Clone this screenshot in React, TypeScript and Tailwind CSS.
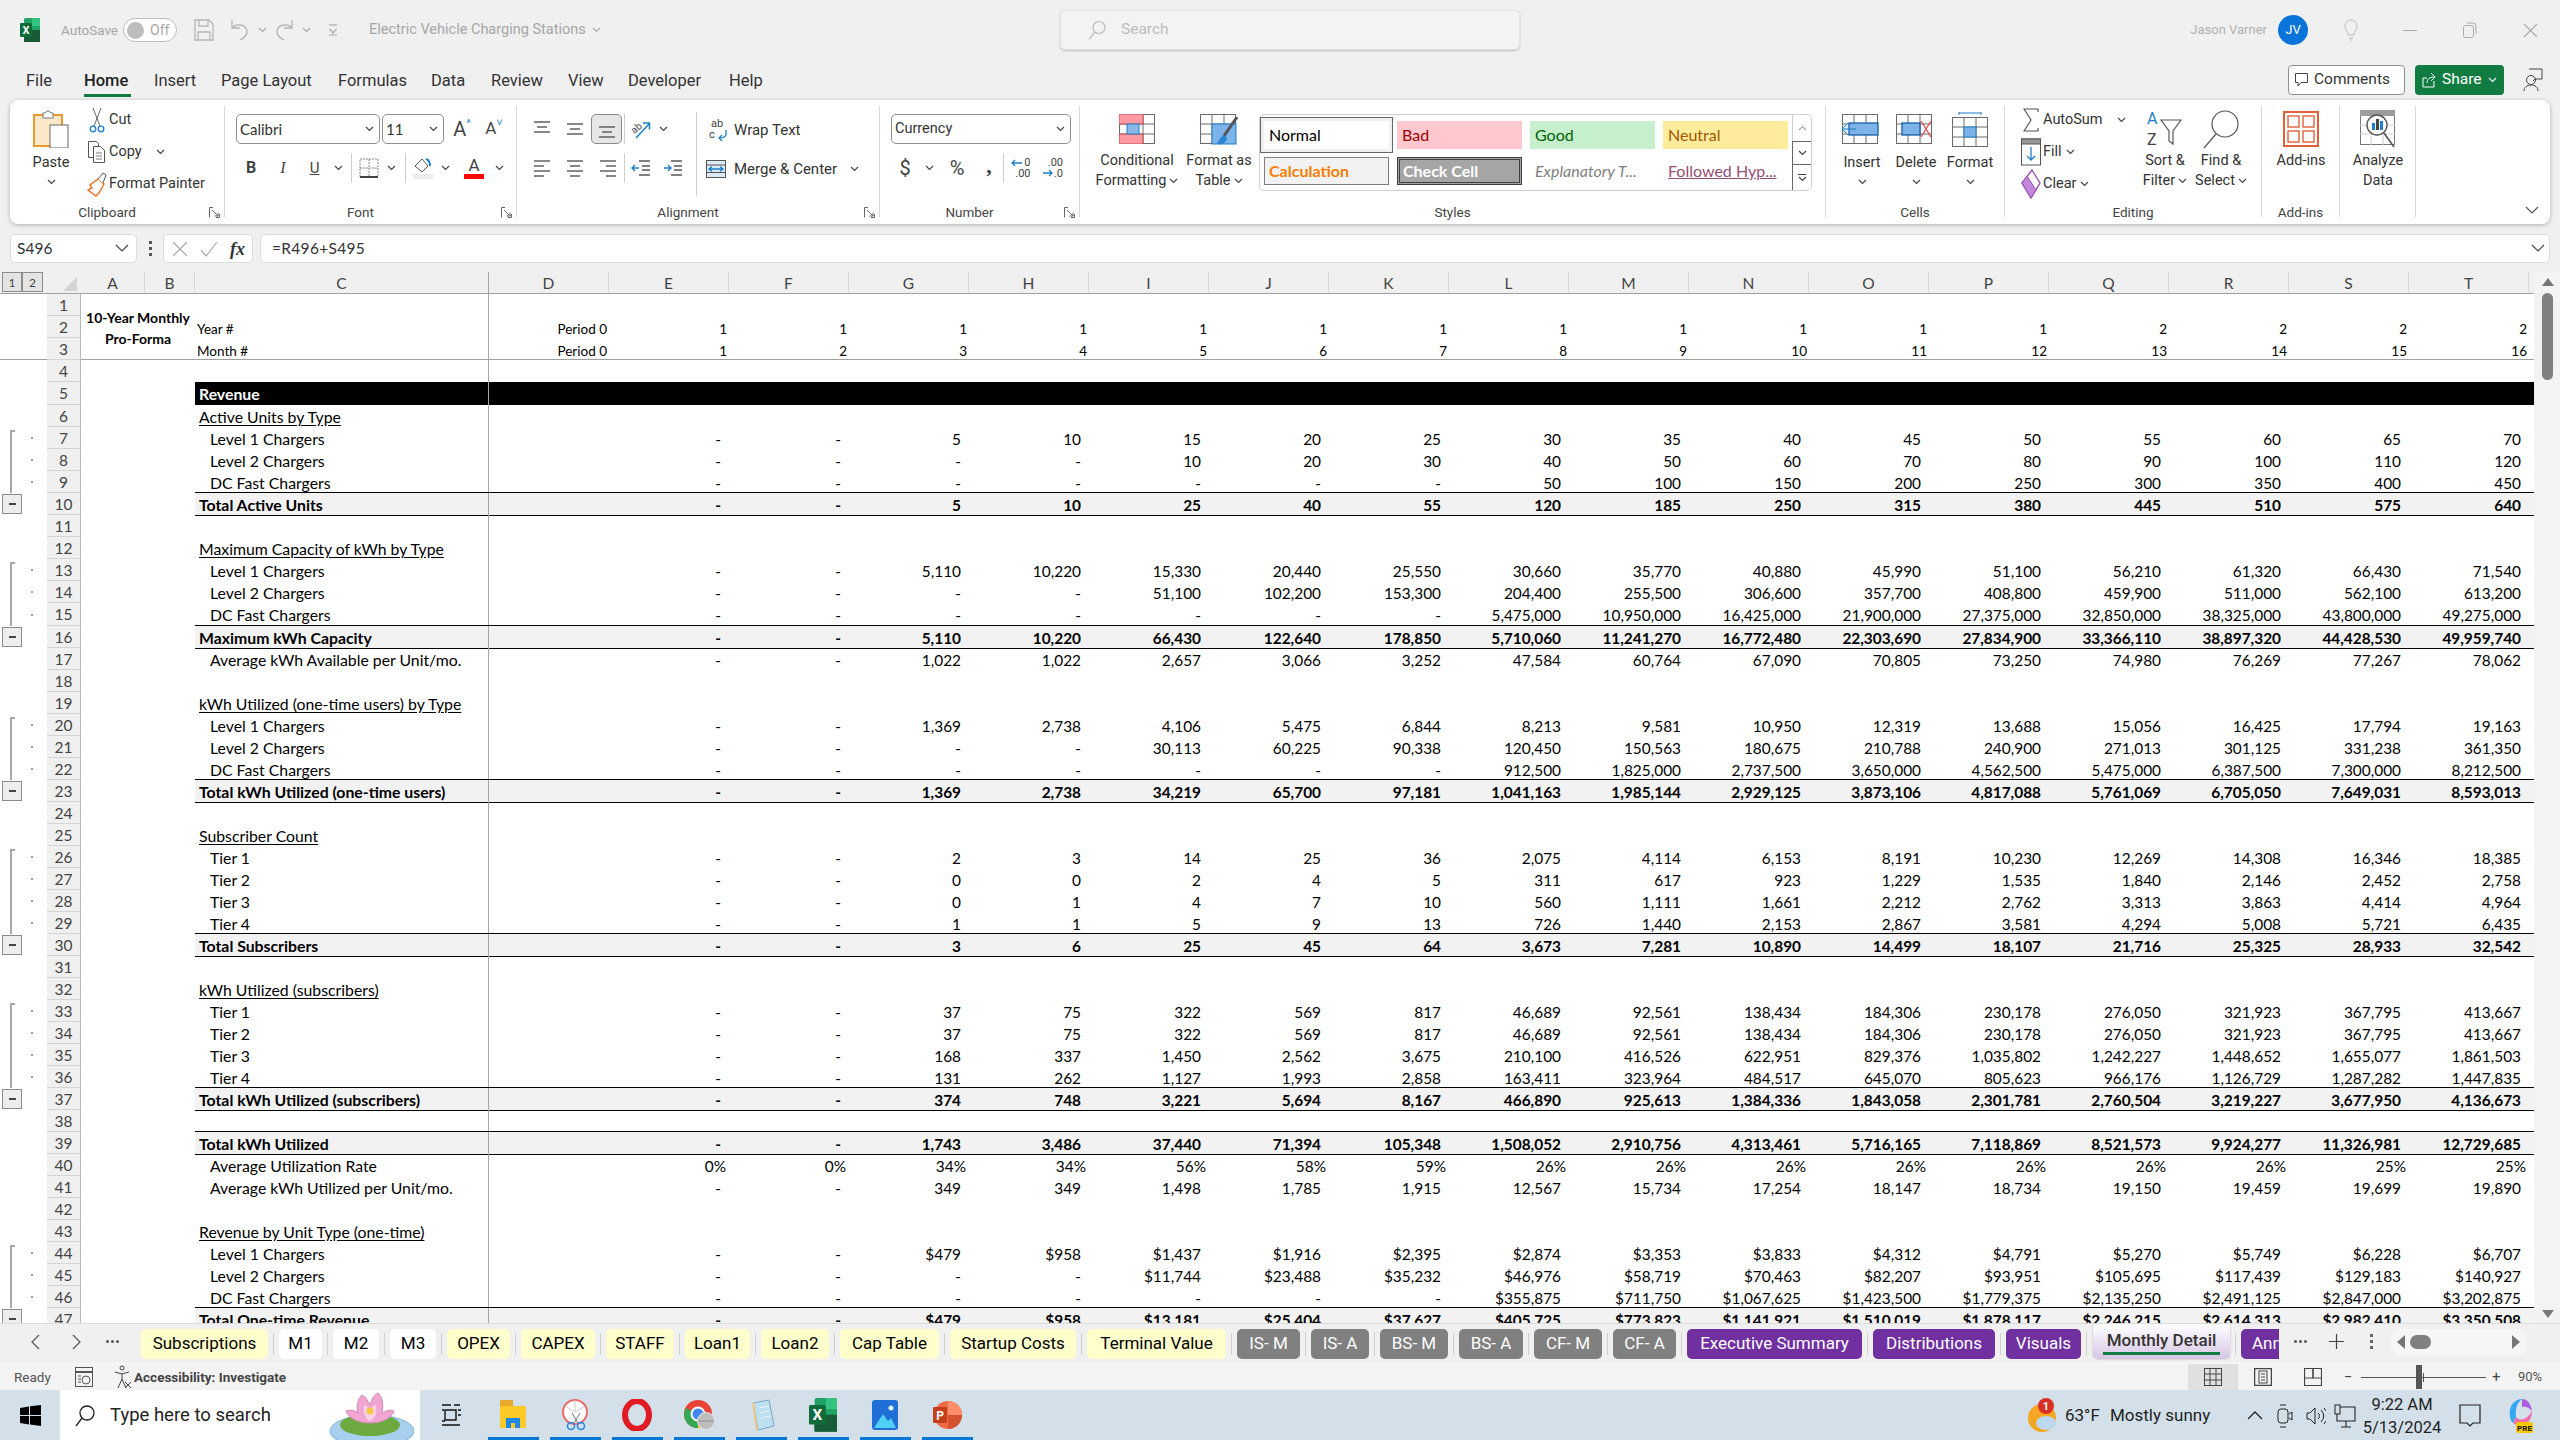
import React from 'react';

type N = React.ReactNode;
const Svg = ({ w, h, children, className }: { w: number; h: number; children: N; className?: string }) => (
  <svg width={w} height={h} viewBox={`0 0 ${w} ${h}`} fill="none" className={`flex-none ${className || ''}`}>{children}</svg>
);
const Chev = ({ c = '#444' }: { c?: string }) => (
  <Svg w={9} h={6}><path d="M1 1l3.5 3.5L8 1" stroke={c} strokeWidth="1.2" /></Svg>
);
const BigChev = ({ c = '#555' }: { c?: string }) => (
  <Svg w={14} h={9}><path d="M1 1l6 6 6-6" stroke={c} strokeWidth="1.2" /></Svg>
);

const ExcelLogo = ({ s = 20 }: { s?: number }) => (
  <svg width={s} height={s * 1.2} viewBox="0 0 20 24" className="flex-none">
    <rect x="4" y="0" width="16" height="24" rx="1.5" fill="#21a366" />
    <rect x="12" y="0" width="8" height="8" fill="#33c481" />
    <rect x="4" y="12" width="16" height="12" fill="#107c41" />
    <rect x="12" y="12" width="8" height="6" fill="#185c37" />
    <rect x="4" y="18" width="16" height="6" fill="#185c37" />
    <rect x="0" y="5" width="12" height="14" rx="1" fill="#0f6b3a" />
    <text x="6" y="16" fontSize="11" fontWeight="700" fill="#fff" textAnchor="middle" fontFamily="Roboto, sans-serif">X</text>
  </svg>
);

const Lines = ({ ys, xs }: { ys: number[]; xs: [number, number][] }) => (
  <Svg w={20} h={20}>
    {ys.map((y, i) => <path key={i} d={`M${xs[i][0]} ${y}H${xs[i][1]}`} stroke="#555" strokeWidth="1.4" />)}
  </Svg>
);

const Grid = ({ w = 36, h = 30, c = '#6b6b6b' }: { w?: number; h?: number; c?: string }) => (
  <>
    <rect x=".5" y=".5" width={w - 1} height={h - 1} fill="#fff" stroke={c} />
    {[1, 2].map(i => <path key={i} d={`M${(w * i) / 3} 0V${h}`} stroke={c} />)}
    {[1, 2].map(i => <path key={i} d={`M0 ${(h * i) / 3}H${w}`} stroke={c} />)}
  </>
);

const Group = ({ className, label, launcher, children }: { className: string; label?: string; launcher?: boolean; children: N }) => (
  <div className={`flex-none flex flex-col h-[111px] my-[6px] border-r border-[#d9d9d9] ${className}`}>
    <div className="flex-1 flex min-h-0">{children}</div>
    <div className="h-[20px] -mb-[5px] flex items-center">
      <div className="flex-1 text-center text-[13.5px] leading-[20px] text-[#444]">{label}</div>
      {launcher && (
        <div className="w-[20px] flex justify-center">
          <Svg w={11} h={11}><path d="M.5 10.5V.5H4M10.5 7v3.5H7M3 3l6 6M9 5.5V9H5.5" stroke="#666" /></Svg>
        </div>
      )}
    </div>
  </div>
);

const Box = ({ className, children }: { className: string; children: N }) => (
  <div className={`flex-none flex items-center justify-center ${className}`}>{children}</div>
);
const VSep = ({ className }: { className: string }) => <div className={`flex-none bg-[#cfcfcf] w-[1px] ${className}`} />;

const IconRow = ({ icon, label, chev, className }: { icon: N; label: string; chev?: N; className?: string }) => (
  <div className={`h-7 flex items-center text-[14.5px] text-[#333] whitespace-nowrap ${className || ''}`}>
    <div className="w-[24px] flex-none flex justify-center">{icon}</div>
    <span>{label}</span>
    {chev}
  </div>
);

const BigBtn = ({ icon, lines, className, chevLine, top }: { icon: N; lines: string[]; className: string; chevLine?: boolean; top?: string }) => (
  <div className={`flex-none flex flex-col items-center ${className}`}>
    <div className={`flex items-center justify-center ${top || 'h-[45px]'}`}>{icon}</div>
    {lines.map((l, i) => (
      <div key={i} className="leading-[20px] text-[14.5px] text-[#333] whitespace-nowrap flex items-center gap-[3px]">
        {l}{chevLine && i === lines.length - 1 && <Chev />}
      </div>
    ))}
  </div>
);

function Ribbon() {
  return (
    <div className="mx-[10px] h-[124px] bg-white rounded-[8px] shadow-[0_1px_4px_rgba(0,0,0,0.28)] flex flex-none">
      {/* Clipboard */}
      <Group className="w-[215px]" label="Clipboard" launcher>
        <div className="w-[50px] ml-[16px] flex-none flex flex-col items-center pt-[4px]">
          <Svg w={36} h={38}>
            <rect x="1" y="5" width="28" height="31" fill="#fbe8c9" stroke="#e89a2e" strokeWidth="2" />
            <path d="M10 5V3h2l2-2h2l2 2h2v5H10z" fill="#fff" stroke="#777" />
            <rect x="17" y="15" width="18" height="23" fill="#fff" stroke="#666" />
          </Svg>
          <div className="text-[14.5px] text-[#333] leading-[20px] mt-[5px]">Paste</div>
          <div className="mt-[6px]"><Chev /></div>
        </div>
        <div className="ml-[9px] flex flex-col gap-1">
          <IconRow label="Cut" icon={
            <Svg w={16} h={26}>
              <path d="M5 19L12 1M11 19L4 1" stroke="#666" />
              <circle cx="4" cy="22" r="2.8" stroke="#1e7fc9" strokeWidth="1.3" />
              <circle cx="12" cy="22" r="2.8" stroke="#1e7fc9" strokeWidth="1.3" />
            </Svg>} />
          <IconRow label="Copy" chev={<div className="ml-[14px]"><Chev /></div>} icon={
            <Svg w={20} h={24}>
              <path d="M1.5 1.5h8l2 2v14h-10z" fill="#fff" stroke="#555" />
              <path d="M6.5 6.5h7l4 4v12h-11z" fill="#fff" stroke="#555" />
              <path d="M9 13h6M9 16h6M9 19h6" stroke="#777" />
            </Svg>} />
          <IconRow label="Format Painter" icon={
            <Svg w={20} h={26}>
              <path d="M11 8l6 5-5 9-3 3-8-6 4-2-2-3z" fill="#fff" stroke="#e8792a" strokeWidth="1.5" />
              <path d="M11 8l5-6 3 2-3 8" fill="#fff" stroke="#555" />
            </Svg>} />
        </div>
      </Group>

      {/* Font */}
      <Group className="w-[292px]" label="Font" launcher>
        <div className="pl-[11px] pt-[8px] flex flex-col gap-[10px]">
          <div className="flex items-center h-[30px]">
            <div className="w-[144px] h-[30px] rounded-[5px] border border-[#8f8f8f] flex items-center justify-between px-[3px] pr-[5px] text-[15px] font-['Lato',sans-serif] text-[#333]">Calibri<Chev /></div>
            <div className="ml-[2px] w-[62px] h-[30px] rounded-[5px] border border-[#8f8f8f] flex items-center justify-between px-[3px] pr-[5px] text-[15px] font-['Lato',sans-serif] text-[#333]">11<Chev /></div>
            <Box className="w-[32px] ml-[2px] text-[20px] text-[#444]">A<span className="text-[11px] text-[#1e7fc9] -mt-[10px]">^</span></Box>
            <Box className="w-[32px] text-[17px] text-[#444]">A<span className="text-[11px] text-[#1e7fc9] -mt-[12px]">˅</span></Box>
          </div>
          <div className="flex items-center h-[28px] -ml-[1px] text-[#444]">
            <Box className="w-[32px] font-bold text-[16px]">B</Box>
            <Box className="w-[32px] italic text-[16px] font-['Liberation_Serif',serif]">I</Box>
            <Box className="w-[31px] underline text-[15px]">U</Box>
            <Box className="w-[16px]"><Chev /></Box>
            <Box className="w-[10px]"><VSep className="h-[30px]" /></Box>
            <Box className="w-[26px]">
              <Svg w={20} h={20}>
                <path d="M1 1h18v18H1zM10 1v18M1 10h18" stroke="#888" strokeDasharray="2 1" />
                <path d="M1 19h18" stroke="#444" strokeWidth="2" />
              </Svg>
            </Box>
            <Box className="w-[18px]"><Chev /></Box>
            <Box className="w-[10px]"><VSep className="h-[30px]" /></Box>
            <Box className="w-[26px]">
              <Svg w={22} h={24}>
                <path d="M3 10l7-7 6 7-6 6z" fill="#fff" stroke="#555" />
                <path d="M14 3c3 1 4 4 4 7" stroke="#1e7fc9" strokeWidth="2" />
                <rect x="1" y="18" width="20" height="5" fill="#ececec" />
              </Svg>
            </Box>
            <Box className="w-[18px]"><Chev /></Box>
            <Box className="w-[40px]">
              <div className="flex flex-col items-center leading-[16px] text-[17px]">A<div className="w-[20px] h-[5px] bg-[#ff0000] mt-[1px]" /></div>
            </Box>
            <Box className="w-[10px]"><Chev /></Box>
          </div>
        </div>
      </Group>

      {/* Alignment */}
      <Group className="w-[363px]" label="Alignment" launcher>
        <div className="ml-[8px] w-[171px] flex-none pt-[8px] flex flex-col gap-[10px]">
          <div className="flex items-center h-[30px]">
            <Box className="w-[33px]"><Lines ys={[3, 8, 13]} xs={[[2, 18], [5, 15], [2, 18]]} /></Box>
            <Box className="w-[33px]"><Lines ys={[5, 10, 15]} xs={[[2, 18], [5, 15], [2, 18]]} /></Box>
            <Box className="w-[31px] h-[30px] bg-[#e6e6e6] border border-[#8a8a8a] rounded-[5px]"><Lines ys={[8, 13, 18]} xs={[[2, 18], [5, 15], [2, 18]]} /></Box>
            <VSep className="h-[30px] ml-[2px]" />
            <Box className="w-[30px]">
              <Svg w={22} h={22}>
                <text x="2" y="13" fontSize="10" fill="#444" transform="rotate(-40 8 10)" fontFamily="Roboto, sans-serif">ab</text>
                <path d="M7 20L20 6M14 5h6.500v6.500" stroke="#1e7fc9" strokeWidth="1.5" />
              </Svg>
            </Box>
            <Box className="w-[16px]"><Chev /></Box>
          </div>
          <div className="flex items-center h-[28px]">
            <Box className="w-[33px]"><Lines ys={[3, 8, 13, 18]} xs={[[2, 18], [2, 12], [2, 18], [2, 12]]} /></Box>
            <Box className="w-[33px]"><Lines ys={[3, 8, 13, 18]} xs={[[2, 18], [5, 15], [2, 18], [5, 15]]} /></Box>
            <Box className="w-[33px]"><Lines ys={[3, 8, 13, 18]} xs={[[2, 18], [8, 18], [2, 18], [8, 18]]} /></Box>
            <VSep className="h-[30px]" />
            <Box className="w-[32px]">
              <Svg w={20} h={20}>
                <path d="M8 3h11M11 8h8M11 12h8M8 17h11" stroke="#555" strokeWidth="1.4" />
                <path d="M8 10H1M4 7l-3 3 3 3" stroke="#1e7fc9" strokeWidth="1.4" />
              </Svg>
            </Box>
            <Box className="w-[32px]">
              <Svg w={20} h={20}>
                <path d="M8 3h11M11 8h8M11 12h8M8 17h11" stroke="#555" strokeWidth="1.4" />
                <path d="M1 10h7M5 7l3 3-3 3" stroke="#1e7fc9" strokeWidth="1.4" />
              </Svg>
            </Box>
          </div>
        </div>
        <VSep className="h-[84px] mt-[6px]" />
        <div className="pt-[9px] flex flex-col gap-[10px] text-[15px] text-[#333] whitespace-nowrap">
          <div className="h-[30px] flex items-center">
            <Box className="w-[37px] pl-[6px]">
              <Svg w={22} h={24}>
                <text x="3" y="9" fontSize="11" fill="#444" fontFamily="Roboto, sans-serif">ab</text>
                <text x="1" y="20" fontSize="11" fill="#444" fontFamily="Roboto, sans-serif">c</text>
                <path d="M18 12v4c0 3-3 4-7 4M14 17l-3 3 3 3" stroke="#1e7fc9" strokeWidth="1.3" />
              </Svg>
            </Box>
            <span>Wrap Text</span>
          </div>
          <div className="h-[28px] flex items-center">
            <Box className="w-[37px]">
              <Svg w={20} h={18}>
                <rect x=".5" y=".5" width="19" height="17" fill="#dbeaf7" stroke="#555" />
                <path d="M0 5h20M0 12.500h20" stroke="#555" />
                <path d="M3 9h14M6 6.500L3 9l3 2.500M14 6.500L17 9l-3 2.500" stroke="#1e7fc9" strokeWidth="1.3" />
              </Svg>
            </Box>
            <span>Merge &amp; Center</span>
            <div className="ml-[13px]"><Chev /></div>
          </div>
        </div>
      </Group>

      {/* Number */}
      <Group className="w-[200px]" label="Number" launcher>
        <div className="pl-[11px] pt-[8px] flex flex-col gap-[10px]">
          <div className="w-[180px] h-[30px] rounded-[5px] border border-[#8f8f8f] flex items-center justify-between pl-[3px] pr-[5px] text-[14.5px] text-[#333]">Currency<Chev /></div>
          <div className="flex items-center h-[28px] text-[#444]">
            <Box className="w-[28px] text-[20px]">$</Box>
            <Box className="w-[20px]"><Chev /></Box>
            <Box className="w-[36px] text-[20px]">%</Box>
            <Box className="w-[28px] text-[22px] font-bold font-['Liberation_Serif',serif] -mt-[6px]">,</Box>
            <VSep className="h-[30px]" />
            <Box className="w-[33px]">
              <div className="relative text-[11px] leading-[11px] text-right w-[20px] text-[#444]">
                <div>0</div><div>.00</div>
                <Svg w={11} h={8} className="absolute left-0 top-[2px]"><path d="M11 4H1M4 1L1 4l3 3" stroke="#1e7fc9" strokeWidth="1.3" /></Svg>
              </div>
            </Box>
            <Box className="w-[32px]">
              <div className="relative text-[11px] leading-[11px] text-right w-[20px] text-[#444]">
                <div>.00</div><div>.0</div>
                <Svg w={11} h={8} className="absolute left-0 top-[12px]"><path d="M0 4h9M6 1l3 3-3 3" stroke="#1e7fc9" strokeWidth="1.3" /></Svg>
              </div>
            </Box>
          </div>
        </div>
      </Group>

      {/* Styles */}
      <Group className="w-[746px]" label="Styles">
        <div className="ml-[12px] pt-[8px] flex">
          <BigBtn className="w-[90px]" top="h-[37px] items-start" lines={['Conditional', 'Formatting']} chevLine icon={
            <Svg w={36} h={30}>
              <Grid />
              <rect x="0" y="0" width="24" height="10" fill="#ff9aa2" stroke="#c8484f" />
              <rect x="0" y="20" width="24" height="10" fill="#ff9aa2" stroke="#c8484f" />
              <rect x="8" y="10" width="12" height="10" fill="#8ab8e6" stroke="#1e7fc9" />
            </Svg>} />
          <BigBtn className="w-[74px]" top="h-[37px] items-start" lines={['Format as', 'Table']} chevLine icon={
            <Svg w={38} h={32}>
              <Grid />
              <rect x="12" y="10" width="24" height="20" fill="#7db3e8" stroke="#1e7fc9" />
              <path d="M37 3L24 22" stroke="#555" strokeWidth="3" />
              <path d="M24 21c-3 1-5 5-7 9 5 1 9-1 10-6z" fill="#2a86d4" />
            </Svg>} />
          <div className="ml-[3px] w-[553px] h-[77px] rounded-[5px] border border-[#d0d0d0] flex font-['Lato',sans-serif] text-[16px] leading-[28px]">
            <div className="flex-1 pl-[4px] pt-[6px] flex flex-col gap-[8px] min-w-0">
              <div className="flex gap-[8px]">
                <div className="w-[125px] h-[28px] pl-[5px] bg-white text-black shadow-[0_0_0_3px_#f0f0f0,0_0_0_4px_#666]">Normal</div>
                <div className="w-[125px] h-[28px] pl-[5px] bg-[#ffc7ce] text-[#9c0006]">Bad</div>
                <div className="w-[125px] h-[28px] pl-[5px] bg-[#c6efce] text-[#006100]">Good</div>
                <div className="w-[125px] h-[28px] pl-[5px] bg-[#ffeb9c] text-[#9c5700]">Neutral</div>
              </div>
              <div className="flex gap-[8px]">
                <div className="w-[125px] h-[28px] pl-[4px] leading-[26px] bg-[#f2f2f2] border border-[#7f7f7f] text-[#fa7d00] font-bold">Calculation</div>
                <div className="w-[125px] h-[28px] pl-[3px] leading-[22px] bg-[#a5a5a5] border-[3px] border-double border-[#3f3f3f] text-white font-bold">Check Cell</div>
                <div className="w-[125px] h-[28px] pl-[5px] italic text-[#7f7f7f] whitespace-nowrap">Explanatory T...</div>
                <div className="w-[125px] h-[28px] pl-[5px] underline text-[#954f72] whitespace-nowrap">Followed Hyp...</div>
              </div>
            </div>
            <div className="w-[19px] flex-none flex flex-col">
              <Box className="h-[26px] border-l border-[#d0d0d0]"><span className="rotate-180 flex"><Chev c="#aaa" /></span></Box>
              <Box className="h-[24px] border border-[#666] border-r-0"><Chev /></Box>
              <Box className="h-[25px] border-l border-[#666] flex-col gap-[1px]"><div className="w-[8px] h-[1px] bg-[#444]" /><Chev /></Box>
            </div>
          </div>
        </div>
      </Group>

      {/* Cells */}
      <Group className="w-[179px]" label="Cells">
        <div className="ml-[9px] flex">
          {[
            ['Insert', <Svg w={40} h={32} key="i"><Grid w={36} h={30} /><rect x="7" y="9" width="29" height="12" fill="#7db3e8" stroke="#1560a8" strokeWidth="1.3" /><path d="M14 15H1M6 9l-6 6 6 6" stroke="#1e7fc9" fill="#dbeaf7" /></Svg>],
            ['Delete', <Svg w={40} h={32} key="d"><Grid w={36} h={30} /><rect x="6" y="9" width="18" height="12" fill="#7db3e8" stroke="#1560a8" strokeWidth="1.3" /><path d="M25 7l10 16M35 7L25 23" stroke="#e84a4a" strokeWidth="1.3" /></Svg>],
            ['Format', <Svg w={38} h={36} key="f"><g transform="translate(1,5)"><Grid w={36} h={30} /><rect x="12" y="10" width="12" height="10" fill="#7db3e8" stroke="#1e7fc9" /></g><path d="M8 1h22M8 0v3M30 0v3" stroke="#1e7fc9" /></Svg>],
          ].map(([l, ic]) => (
            <div key={l as string} className="w-[54px] flex flex-col items-center">
              <div className="h-[47px] flex items-center justify-center">{ic}</div>
              <div className="leading-[20px] text-[14.5px] text-[#333]">{l}</div>
              <div className="mt-[6px]"><Chev /></div>
            </div>
          ))}
        </div>
      </Group>

      {/* Editing */}
      <Group className="w-[257px]" label="Editing">
        <div className="ml-[14px] w-[118px] flex-none flex flex-col gap-1">
          <IconRow label="AutoSum" chev={<div className="ml-[14px]"><Chev /></div>} icon={
            <Svg w={16} h={24}><path d="M15 4V1H1l7 11-7 11h14v-3" stroke="#555" strokeWidth="1.2" /></Svg>} />
          <IconRow label="Fill" chev={<div className="ml-[4px]"><Chev /></div>} icon={
            <Svg w={20} h={28}>
              <rect x=".5" y="1" width="19" height="26" fill="#fff" stroke="#555" />
              <rect x=".5" y="1" width="19" height="5" fill="#999" stroke="#555" />
              <path d="M10 9v13M6 18l4 4 4-4" stroke="#1e7fc9" strokeWidth="1.3" />
            </Svg>} />
          <IconRow label="Clear" chev={<div className="ml-[4px]"><Chev /></div>} icon={
            <Svg w={20} h={30}>
              <path d="M11 1l8 13-9 15-9-15z" fill="#fff" stroke="#9b4fb3" strokeWidth="1.4" />
              <path d="M1 14l5-7 9 14-5 8z" fill="#c486d8" stroke="#9b4fb3" />
            </Svg>} />
        </div>
        <BigBtn className="w-[56px]" lines={['Sort &', 'Filter']} chevLine icon={
          <Svg w={36} h={38}>
            <text x="0" y="14" fontSize="16" fill="#1e7fc9" fontFamily="Roboto, sans-serif">A</text>
            <text x="0" y="35" fontSize="16" fill="#444" fontFamily="Roboto, sans-serif">Z</text>
            <path d="M14 10h20l-8 11v13l-4-3V21z" fill="#fff" stroke="#555" strokeWidth="1.2" />
          </Svg>} />
        <BigBtn className="w-[56px]" lines={['Find &', 'Select']} chevLine icon={
          <Svg w={38} h={40}>
            <circle cx="23" cy="15" r="13" fill="#fff" stroke="#555" strokeWidth="1.2" />
            <path d="M14 25L2 39" stroke="#555" strokeWidth="1.2" />
          </Svg>} />
      </Group>

      {/* Add-ins */}
      <Group className="w-[78px]" label="Add-ins">
        <BigBtn className="w-[78px]" lines={['Add-ins']} icon={
          <Svg w={36} h={36}>
            <rect x="1" y="1" width="34" height="34" stroke="#e0613a" strokeWidth="2" />
            <rect x="5" y="5" width="11" height="11" stroke="#e0613a" strokeWidth="1.4" />
            <rect x="20" y="5" width="11" height="11" stroke="#e0613a" strokeWidth="1.4" />
            <rect x="5" y="20" width="11" height="11" stroke="#e0613a" strokeWidth="1.4" />
            <rect x="20" y="20" width="11" height="11" stroke="#e0613a" strokeWidth="1.4" />
          </Svg>} />
      </Group>

      {/* Analyze */}
      <Group className="w-[76px]" label="">
        <BigBtn className="w-[76px]" lines={['Analyze', 'Data']} icon={
          <Svg w={36} h={38}>
            <rect x=".5" y=".5" width="34" height="34" fill="#fff" stroke="#777" />
            <rect x="0" y="0" width="35" height="6" fill="#9c9c9c" />
            <path d="M0 15h35M0 24h35M11 6v29M23 6v29" stroke="#ccc" />
            <circle cx="17" cy="15" r="10" fill="#fff" stroke="#555" strokeWidth="1.4" />
            <rect x="12" y="13" width="3" height="7" fill="#1e7fc9" />
            <rect x="16" y="9" width="3" height="11" fill="#444" />
            <rect x="20" y="11" width="3" height="9" fill="#1e7fc9" />
            <path d="M24 23l10 14" stroke="#555" strokeWidth="1.6" />
          </Svg>} />
      </Group>

      <div className="ml-auto mr-[11px] mb-[9px] self-end"><BigChev /></div>
    </div>
  );
}

function TitleBar() {
  return (
    <div className="h-[60px] flex-none flex items-center text-[#a6a6a6] text-[14.5px]">
      <div className="w-[1060px] flex-none flex items-center">
        <div className="ml-[20px]"><ExcelLogo s={20} /></div>
        <span className="ml-[21px] w-[54px] whitespace-nowrap text-[13.5px]">AutoSave</span>
        <div className="ml-[8px] w-[54px] h-[24px] rounded-full border-[1.5px] border-[#bdbdbd] bg-white flex items-center pl-[3px]">
          <div className="w-[17px] h-[17px] rounded-full bg-[#bdbdbd]" />
          <span className="ml-[6px] text-[14px]">Off</span>
        </div>
        <div className="ml-[17px]">
          <Svg w={20} h={22}><path d="M1 1h14l4 4v16H1z" stroke="#b5b5b5" strokeWidth="1.3" /><path d="M5 1v6h9V1M4 21v-8h12v8" stroke="#b5b5b5" strokeWidth="1.3" /></Svg>
        </div>
        <div className="ml-[16px]">
          <Svg w={20} h={22}><path d="M2 1v8h8M2 9c4-5 14-4 15 3 .6 4-3 7-7 9" stroke="#b5b5b5" strokeWidth="1.3" /></Svg>
        </div>
        <div className="ml-[8px]"><Chev c="#aaa" /></div>
        <div className="ml-[7px]">
          <Svg w={20} h={22}><path d="M18 1v8h-8M18 9C14 4 4 5 3 12c-.6 4 3 7 7 9" stroke="#b5b5b5" strokeWidth="1.3" /></Svg>
        </div>
        <div className="ml-[8px]"><Chev c="#aaa" /></div>
        <div className="ml-[17px]">
          <Svg w={10} h={12}><path d="M1 1h8" stroke="#aaa" strokeWidth="1.2" /><path d="M1.500 5L5 9l3.500-4" stroke="#aaa" strokeWidth="1.2" /><path d="M1 11h8" stroke="#aaa" /></Svg>
        </div>
        <span className="ml-[31px] whitespace-nowrap">Electric Vehicle Charging Stations</span>
        <div className="ml-[6px]"><Chev c="#aaa" /></div>
      </div>
      <div className="w-[460px] h-[40px] flex-none rounded-[5px] bg-[#f3f3f3] border border-[#e2e2e2] shadow-[0_1px_2px_rgba(0,0,0,0.2)] flex items-center pl-[27px] text-[#bdbdbd] text-[15.5px]">
        <Svg w={18} h={20}><circle cx="11" cy="7.500" r="6" stroke="#bbb" strokeWidth="1.2" /><path d="M7 12l-6 7" stroke="#bbb" strokeWidth="1.2" /></Svg>
        <span className="ml-[15px]">Search</span>
      </div>
      <div className="flex-1 flex items-center justify-end">
        <span className="text-[13px] mr-[11px] text-[#b0b0b0]">Jason Varner</span>
        <div className="w-[30px] h-[30px] rounded-full bg-[#0a74da] text-white text-[13px] flex items-center justify-center">JV</div>
        <div className="w-[58px] flex justify-center ml-[14px]">
          <Svg w={14} h={22}><path d="M4 16c0-4-3-5-3-9a6 6 0 0112 0c0 4-3 5-3 9zM5 19h4M6 21h2" stroke="#bbb" /></Svg>
        </div>
        <div className="w-[60px] flex justify-center"><div className="w-[14px] h-[1px] bg-[#aaa]" /></div>
        <div className="w-[60px] flex justify-center">
          <Svg w={14} h={16}><rect x=".5" y="3.500" width="10" height="12" rx="2" stroke="#aaa" /><path d="M4 1h6a3 3 0 013 3v8" stroke="#aaa" /></Svg>
        </div>
        <div className="w-[60px] flex justify-center mr-0">
          <Svg w={15} h={15}><path d="M1 1l13 13M14 1L1 14" stroke="#aaa" strokeWidth="1.1" /></Svg>
        </div>
      </div>
    </div>
  );
}

function MenuBar() {
  const items = [
    ['File', 'w-[58px]'], ['Home', 'w-[70px]'], ['Insert', 'w-[67px]'], ['Page Layout', 'w-[117px]'], ['Formulas', 'w-[93px]'],
    ['Data', 'w-[60px]'], ['Review', 'w-[77px]'], ['View', 'w-[60px]'], ['Developer', 'w-[101px]'], ['Help', 'w-[50px]'],
  ];
  return (
    <div className="h-[40px] flex-none flex pl-[26px] text-[16.5px] text-[#333]">
      {items.map(([l, w]) => (
        <div key={l} className={`${w} pt-[9px] leading-[24px] whitespace-nowrap`}>
          {l === 'Home'
            ? <div className="w-[47px] h-[28px] font-medium border-b-[3px] border-[#107c41] text-[#222]">Home</div>
            : l}
        </div>
      ))}
      <div className="ml-auto flex items-center mr-[17px]">
        <div className="w-[117px] h-[30px] rounded-[4px] bg-white border border-[#8f8f8f] flex items-center pl-[6px] text-[15.5px] gap-[6px]">
          <Svg w={13} h={14}><path d="M.5.5h12v9H6L3 13V9.500H.5z" stroke="#444" /></Svg>Comments
        </div>
        <div className="ml-[10px] w-[89px] h-[30px] rounded-[4px] bg-[#107c41] text-white flex items-center pl-[7px] text-[15.5px] gap-[6px]">
          <Svg w={14} h={16}><path d="M1 6h4v0M1 6v9h11V9M5 11c0-4 3-6 7-6M9 1l4 4-4 4" stroke="#fff" /></Svg>Share<Chev c="#fff" />
        </div>
        <div className="ml-[19px]">
          <Svg w={20} h={24}><circle cx="8" cy="12" r="4.500" stroke="#444" /><path d="M1 23c0-4 3-6 7-6s7 2 7 6M6 1h13v10h-7l-2 2" stroke="#444" /></Svg>
        </div>
      </div>
    </div>
  );
}

function FormulaBar() {
  return (
    <div className="mt-[10px] h-[29px] flex-none flex items-stretch pl-[10px] pr-[10px] font-['Lato',sans-serif] text-[15.5px] text-[#333]">
      <div className="w-[127px] bg-white rounded-[5px] border border-[#dcdcdc] flex items-center justify-between pl-[6px] pr-[7px]">S496<BigChev c="#444" /></div>
      <div className="w-[26px] flex flex-col items-center justify-center gap-[3px]">
        {[0, 1, 2].map(i => <div key={i} className="w-[3px] h-[3px] bg-[#555]" />)}
      </div>
      <div className="w-[90px] bg-white rounded-[5px] border border-[#dcdcdc] flex items-center pl-[8px] gap-[12px]">
        <Svg w={16} h={16}><path d="M1 1l14 14M15 1L1 15" stroke="#aaa" strokeWidth="1.2" /></Svg>
        <Svg w={18} h={16}><path d="M1 9l5 6L17 1" stroke="#aaa" strokeWidth="1.2" /></Svg>
        <span className="italic font-bold text-[18px] text-[#333] font-['Liberation_Serif',serif] leading-[20px]">fx</span>
      </div>
      <div className="ml-[7px] flex-1 bg-white rounded-[5px] border border-[#dcdcdc] flex items-center justify-between pl-[11px] pr-[4px] tracking-[0.3px]">=R496+S495<BigChev c="#444" /></div>
    </div>
  );
}

/* ---------------- sheet ---------------- */
const COLS = ['E', 'F', 'G', 'H', 'I', 'J', 'K', 'L', 'M', 'N', 'O', 'P', 'Q', 'R', 'S', 'T'];

type Kind = 'blank' | 'head' | 'sec' | 'item' | 'total' | 'plain';
type RowD = { n: number; k: Kind; l?: string; v?: string; o?: 'top' | 'mid' | 'btn' };

const R: RowD[] = [
  { n: 4, k: 'blank' },
  { n: 5, k: 'head', l: 'Revenue' },
  { n: 6, k: 'sec', l: 'Active Units by Type' },
  { n: 7, k: 'item', o: 'top', l: 'Level 1 Chargers', v: '- - 5 10 15 20 25 30 35 40 45 50 55 60 65 70' },
  { n: 8, k: 'item', o: 'mid', l: 'Level 2 Chargers', v: '- - - - 10 20 30 40 50 60 70 80 90 100 110 120' },
  { n: 9, k: 'item', o: 'mid', l: 'DC Fast Chargers', v: '- - - - - - - 50 100 150 200 250 300 350 400 450' },
  { n: 10, k: 'total', o: 'btn', l: 'Total Active Units', v: '- - 5 10 25 40 55 120 185 250 315 380 445 510 575 640' },
  { n: 11, k: 'blank' },
  { n: 12, k: 'sec', l: 'Maximum Capacity of kWh by Type' },
  { n: 13, k: 'item', o: 'top', l: 'Level 1 Chargers', v: '- - 5,110 10,220 15,330 20,440 25,550 30,660 35,770 40,880 45,990 51,100 56,210 61,320 66,430 71,540' },
  { n: 14, k: 'item', o: 'mid', l: 'Level 2 Chargers', v: '- - - - 51,100 102,200 153,300 204,400 255,500 306,600 357,700 408,800 459,900 511,000 562,100 613,200' },
  { n: 15, k: 'item', o: 'mid', l: 'DC Fast Chargers', v: '- - - - - - - 5,475,000 10,950,000 16,425,000 21,900,000 27,375,000 32,850,000 38,325,000 43,800,000 49,275,000' },
  { n: 16, k: 'total', o: 'btn', l: 'Maximum kWh Capacity', v: '- - 5,110 10,220 66,430 122,640 178,850 5,710,060 11,241,270 16,772,480 22,303,690 27,834,900 33,366,110 38,897,320 44,428,530 49,959,740' },
  { n: 17, k: 'item', l: 'Average kWh Available per Unit/mo.', v: '- - 1,022 1,022 2,657 3,066 3,252 47,584 60,764 67,090 70,805 73,250 74,980 76,269 77,267 78,062' },
  { n: 18, k: 'blank' },
  { n: 19, k: 'sec', l: 'kWh Utilized (one-time users) by Type' },
  { n: 20, k: 'item', o: 'top', l: 'Level 1 Chargers', v: '- - 1,369 2,738 4,106 5,475 6,844 8,213 9,581 10,950 12,319 13,688 15,056 16,425 17,794 19,163' },
  { n: 21, k: 'item', o: 'mid', l: 'Level 2 Chargers', v: '- - - - 30,113 60,225 90,338 120,450 150,563 180,675 210,788 240,900 271,013 301,125 331,238 361,350' },
  { n: 22, k: 'item', o: 'mid', l: 'DC Fast Chargers', v: '- - - - - - - 912,500 1,825,000 2,737,500 3,650,000 4,562,500 5,475,000 6,387,500 7,300,000 8,212,500' },
  { n: 23, k: 'total', o: 'btn', l: 'Total kWh Utilized (one-time users)', v: '- - 1,369 2,738 34,219 65,700 97,181 1,041,163 1,985,144 2,929,125 3,873,106 4,817,088 5,761,069 6,705,050 7,649,031 8,593,013' },
  { n: 24, k: 'blank' },
  { n: 25, k: 'sec', l: 'Subscriber Count' },
  { n: 26, k: 'item', o: 'top', l: 'Tier 1', v: '- - 2 3 14 25 36 2,075 4,114 6,153 8,191 10,230 12,269 14,308 16,346 18,385' },
  { n: 27, k: 'item', o: 'mid', l: 'Tier 2', v: '- - 0 0 2 4 5 311 617 923 1,229 1,535 1,840 2,146 2,452 2,758' },
  { n: 28, k: 'item', o: 'mid', l: 'Tier 3', v: '- - 0 1 4 7 10 560 1,111 1,661 2,212 2,762 3,313 3,863 4,414 4,964' },
  { n: 29, k: 'item', o: 'mid', l: 'Tier 4', v: '- - 1 1 5 9 13 726 1,440 2,153 2,867 3,581 4,294 5,008 5,721 6,435' },
  { n: 30, k: 'total', o: 'btn', l: 'Total Subscribers', v: '- - 3 6 25 45 64 3,673 7,281 10,890 14,499 18,107 21,716 25,325 28,933 32,542' },
  { n: 31, k: 'blank' },
  { n: 32, k: 'sec', l: 'kWh Utilized (subscribers)' },
  { n: 33, k: 'item', o: 'top', l: 'Tier 1', v: '- - 37 75 322 569 817 46,689 92,561 138,434 184,306 230,178 276,050 321,923 367,795 413,667' },
  { n: 34, k: 'item', o: 'mid', l: 'Tier 2', v: '- - 37 75 322 569 817 46,689 92,561 138,434 184,306 230,178 276,050 321,923 367,795 413,667' },
  { n: 35, k: 'item', o: 'mid', l: 'Tier 3', v: '- - 168 337 1,450 2,562 3,675 210,100 416,526 622,951 829,376 1,035,802 1,242,227 1,448,652 1,655,077 1,861,503' },
  { n: 36, k: 'item', o: 'mid', l: 'Tier 4', v: '- - 131 262 1,127 1,993 2,858 163,411 323,964 484,517 645,070 805,623 966,176 1,126,729 1,287,282 1,447,835' },
  { n: 37, k: 'total', o: 'btn', l: 'Total kWh Utilized (subscribers)', v: '- - 374 748 3,221 5,694 8,167 466,890 925,613 1,384,336 1,843,058 2,301,781 2,760,504 3,219,227 3,677,950 4,136,673' },
  { n: 38, k: 'blank' },
  { n: 39, k: 'total', l: 'Total kWh Utilized', v: '- - 1,743 3,486 37,440 71,394 105,348 1,508,052 2,910,756 4,313,461 5,716,165 7,118,869 8,521,573 9,924,277 11,326,981 12,729,685' },
  { n: 40, k: 'item', l: 'Average Utilization Rate', v: '0% 0% 34% 34% 56% 58% 59% 26% 26% 26% 26% 26% 26% 26% 25% 25%' },
  { n: 41, k: 'item', l: 'Average kWh Utilized per Unit/mo.', v: '- - 349 349 1,498 1,785 1,915 12,567 15,734 17,254 18,147 18,734 19,150 19,459 19,699 19,890' },
  { n: 42, k: 'blank' },
  { n: 43, k: 'sec', l: 'Revenue by Unit Type (one-time)' },
  { n: 44, k: 'item', o: 'top', l: 'Level 1 Chargers', v: '- - $479 $958 $1,437 $1,916 $2,395 $2,874 $3,353 $3,833 $4,312 $4,791 $5,270 $5,749 $6,228 $6,707' },
  { n: 45, k: 'item', o: 'mid', l: 'Level 2 Chargers', v: '- - - - $11,744 $23,488 $35,232 $46,976 $58,719 $70,463 $82,207 $93,951 $105,695 $117,439 $129,183 $140,927' },
  { n: 46, k: 'item', o: 'mid', l: 'DC Fast Chargers', v: '- - - - - - - $355,875 $711,750 $1,067,625 $1,423,500 $1,779,375 $2,135,250 $2,491,125 $2,847,000 $3,202,875' },
  { n: 47, k: 'total', o: 'btn', l: 'Total One-time Revenue', v: '- - $479 $958 $13,181 $25,404 $37,627 $405,725 $773,823 $1,141,921 $1,510,019 $1,878,117 $2,246,215 $2,614,313 $2,982,410 $3,350,508' },
];

const Outline = ({ o }: { o?: RowD['o'] }) => (
  <div className="w-[47px] flex-none flex items-center">
    {o === 'top' && <><div className="ml-[10px] self-stretch mt-[3px] w-[5px] border-l-2 border-t-2 border-[#a8a8a8]" /><div className="ml-[16px] w-[2px] h-[2px] bg-[#a0a0a0]" /></>}
    {o === 'mid' && <><div className="ml-[10px] self-stretch w-[5px] border-l-2 border-[#a8a8a8]" /><div className="ml-[16px] w-[2px] h-[2px] bg-[#a0a0a0]" /></>}
    {o === 'btn' && <div className="ml-[2px] w-[20px] h-[20px] border border-[#8c8c8c] bg-[#ededed] flex items-center justify-center"><div className="w-[7px] h-[2px] bg-[#444]" /></div>}
  </div>
);

const RowHead = ({ n }: { n: number }) => (
  <div className="w-[34px] flex-none bg-[#f0f0f0] border-b border-[#d4d4d4] border-r border-r-[#b8b8b8] text-center text-[15.5px] text-[#444] leading-[23px]">{n}</div>
);

const valClass = (v: string) => (v === '-' ? 'pr-[8px]' : v.endsWith('%') ? 'pr-[3px]' : 'pr-[8px]');

function Row({ d }: { d: RowD }) {
  const h = d.n === 5 || d.n === 15 ? 'h-[23px]' : 'h-[22px]';
  const body =
    d.k === 'head' ? 'bg-black text-white font-bold' :
    d.k === 'total' ? 'bg-[#f2f2f2] font-bold shadow-[0_-1px_0_#000,0_1px_0_#000]' : '';
  const lbl =
    d.k === 'head' || d.k === 'total' ? 'pl-[4px]' :
    d.k === 'sec' ? 'pl-[4px] underline underline-offset-[2px]' :
    'pl-[15px]';
  const vals = d.v ? d.v.split(' ') : [];
  return (
    <div className={`flex ${h}`}>
      <Outline o={d.o} />
      <RowHead n={d.n} />
      <div className="w-[114px] flex-none" />
      <div className={`flex-1 flex leading-[24px] ${body}`}>
        <div className={`w-[294px] flex-none border-r border-[#a6a6a6] whitespace-nowrap text-[15.8px] ${lbl}`}>{d.l}</div>
        <div className="w-[120px] flex-none" />
        {vals.map((v, i) => (
          <div key={i} className={`w-[120px] flex-none text-right ${valClass(v)}`}>{v}</div>
        ))}
      </div>
    </div>
  );
}

function Sheet() {
  const years = '1 1 1 1 1 1 1 1 1 1 1 1 2 2 2 2'.split(' ');
  return (
    <div className="mt-[9px] h-[1051px] flex-none flex overflow-hidden font-['Lato',sans-serif] text-[15.4px] text-black tabular-nums">
      <div className="w-[2534px] flex-none flex flex-col bg-white">
        {/* column headers */}
        <div className="h-[22px] flex-none flex bg-[#f0f0f0] border-b border-[#a0a0a0] text-[#444] text-[15.5px] leading-[23px]">
          <div className="w-[47px] flex-none flex pl-[2px]">
            <div className="w-[20px] h-[20px] border border-[#8c8c8c] bg-[#e4e4e4] text-center text-[12px] leading-[19px]">1</div>
            <div className="w-[21px] h-[20px] border border-[#8c8c8c] bg-[#e4e4e4] text-center text-[12px] leading-[19px] -ml-[0px]">2</div>
          </div>
          <div className="w-[34px] flex-none flex items-end justify-end pr-[4px] pb-[2px]">
            <Svg w={14} h={14}><path d="M14 0v14H0z" fill="#d4d4d4" /></Svg>
          </div>
          <div className="w-[64px] flex-none text-center border-r border-[#d8d8d8]">A</div>
          <div className="w-[50px] flex-none text-center border-r border-[#d8d8d8]">B</div>
          <div className="w-[294px] flex-none text-center border-r border-[#a6a6a6]">C</div>
          <div className="w-[120px] flex-none text-center border-r border-[#d8d8d8]">D</div>
          {COLS.map(c => <div key={c} className="w-[120px] flex-none text-center border-r border-[#d8d8d8]">{c}</div>)}
        </div>
        {/* frozen rows */}
        <div className="h-[66px] flex-none flex border-b border-[#a0a0a0] text-[13.500px] leading-[28px]">
          <div className="w-[47px] flex-none" />
          <div className="w-[34px] flex-none flex flex-col">
            {[1, 2, 3].map(n => (
              <div key={n} className="h-[22px] bg-[#f0f0f0] border-b border-[#d4d4d4] border-r border-r-[#b8b8b8] text-center text-[15.5px] text-[#444] leading-[23px]">{n}</div>
            ))}
          </div>
          <div className="w-[114px] flex-none flex flex-col items-center justify-center font-bold text-[14px] leading-[21px] pt-[3px]">
            <div className="whitespace-nowrap">10-Year Monthly</div>
            <div>Pro-Forma</div>
          </div>
          <div className="flex-1 flex flex-col">
            <div className="h-[22px] flex"><div className="w-[294px] flex-none border-r border-[#a6a6a6]" /></div>
            {[
              ['Year #', years],
              ['Month #', COLS.map((_, i) => String(i + 1))],
            ].map(([l, v]) => (
              <div key={l as string} className="h-[22px] flex">
                <div className="w-[294px] flex-none border-r border-[#a6a6a6] pl-[2px]">{l as string}</div>
                <div className="w-[120px] flex-none text-right pr-[2px]">Period 0</div>
                {(v as string[]).map((x, i) => <div key={i} className="w-[120px] flex-none text-right pr-[2px]">{x}</div>)}
              </div>
            ))}
          </div>
        </div>
        {R.map(d => <Row key={d.n} d={d} />)}
      </div>
      {/* vertical scrollbar */}
      <div className="flex-1 bg-[#f3f3f3] flex flex-col items-center pt-[6px] pl-[1px]">
        <Svg w={12} h={8}><path d="M6 0l6 8H0z" fill="#777" /></Svg>
        <div className="mt-[7px] w-[11px] h-[87px] rounded-full bg-[#808080]" />
        <div className="mt-auto mb-[5px]"><Svg w={12} h={8}><path d="M6 8L0 0h12z" fill="#777" /></Svg></div>
      </div>
    </div>
  );
}

const TABS: [string, string, string][] = [
  ['Subscriptions', 'w-[127px]', 'y'], ['M1', 'w-[43px]', 'w'], ['M2', 'w-[46px]', 'w'], ['M3', 'w-[46px]', 'w'],
  ['OPEX', 'w-[63px]', 'y'], ['CAPEX', 'w-[74px]', 'y'], ['STAFF', 'w-[68px]', 'y'], ['Loan1', 'w-[65px]', 'y'], ['Loan2', 'w-[68px]', 'y'],
  ['Cap Table', 'w-[99px]', 'y'], ['Startup Costs', 'w-[126px]', 'y'], ['Terminal Value', 'w-[139px]', 'y'],
  ['IS- M', 'w-[63px]', 'g'], ['IS- A', 'w-[58px]', 'g'], ['BS- M', 'w-[68px]', 'g'], ['BS- A', 'w-[64px]', 'g'], ['CF- M', 'w-[68px]', 'g'], ['CF- A', 'w-[63px]', 'g'],
  ['Executive Summary', 'w-[175px]', 'p'], ['Distributions', 'w-[122px]', 'p'], ['Visuals', 'w-[75px]', 'p'],
];
const tabCls: Record<string, string> = {
  y: 'bg-[#ffffcc] text-black', w: 'bg-white text-black', g: 'bg-[#808080] text-white', p: 'bg-[#7030a0] text-white',
};

function SheetTabs() {
  return (
    <div className="h-[40px] flex-none bg-[#f0f0f0] border-t border-[#dcdcdc] flex text-[17px]">
      <div className="w-[141px] flex-none flex items-center pb-[4px]">
        <div className="ml-[31px]"><Svg w={9} h={16}><path d="M8 1L1 8l7 7" stroke="#555" strokeWidth="1.2" /></Svg></div>
        <div className="ml-[32px]"><Svg w={9} h={16}><path d="M1 1l7 7-7 7" stroke="#555" strokeWidth="1.2" /></Svg></div>
        <div className="ml-[25px] flex gap-[2px]">{[0, 1, 2].map(i => <div key={i} className="w-[3px] h-[3px] rounded-full bg-[#555]" />)}</div>
      </div>
      <div className="w-[2138px] flex-none flex overflow-hidden">
        {TABS.map(([l, w, c]) => (
          <React.Fragment key={l}>
            <div className={`${w} flex-none h-[30px] mt-[5px] rounded-[5px] flex items-center justify-center whitespace-nowrap ${tabCls[c]}`}>{l}</div>
            <div className="w-[1px] h-[22px] mt-[9px] mx-[5px] flex-none bg-[#cfcfcf]" />
          </React.Fragment>
        ))}
        <div className="w-[137px] h-[35px] flex-none rounded-b-[5px] rounded-t-[3px] bg-gradient-to-b from-[#ffffff] to-[#d6c6e4] shadow-[0_0_2px_rgba(0,0,0,0.3)] flex flex-col items-center pt-[5px] font-medium text-[#333] ml-[1px] whitespace-nowrap">
          <span className="leading-[22px]">Monthly Detail</span>
          <div className="w-[117px] h-[3px] bg-[#107c41] mt-[1px]" />
        </div>
        <div className="w-[1px] h-[22px] mt-[9px] mx-[5px] flex-none bg-[#cfcfcf]" />
        <div className="w-[70px] flex-none h-[30px] mt-[5px] rounded-[5px] bg-[#7030a0] text-white pl-[11px] flex items-center whitespace-nowrap">Annual Detail</div>
      </div>
      <div className="flex-1 flex items-center pb-[4px]">
        <div className="ml-[15px] flex gap-[2px]">{[0, 1, 2].map(i => <div key={i} className="w-[3px] h-[3px] rounded-full bg-[#555]" />)}</div>
        <div className="ml-[22px]"><Svg w={15} h={15}><path d="M7.500 0v15M0 7.500h15" stroke="#444" strokeWidth="1.2" /></Svg></div>
        <div className="ml-[26px] flex flex-col gap-[3px]">{[0, 1, 2].map(i => <div key={i} className="w-[3px] h-[3px] bg-[#666]" />)}</div>
        <div className="ml-[18px] w-[135px] h-[26px] rounded-[8px] bg-[#f6f6f6] flex items-center pl-[6px]">
          <Svg w={8} h={14}><path d="M8 0v14L0 7z" fill="#777" /></Svg>
          <div className="ml-[5px] w-[21px] h-[14px] rounded-full bg-[#808080]" />
          <div className="ml-auto mr-[6px]"><Svg w={8} h={14}><path d="M0 0v14l8-7z" fill="#777" /></Svg></div>
        </div>
      </div>
    </div>
  );
}

function StatusBar() {
  return (
    <div className="h-[27px] flex-none bg-[#f3f3f3] border-t border-[#fafafa] flex items-center text-[13.5px] text-[#555]">
      <span className="ml-[14px] w-[61px]">Ready</span>
      <Svg w={18} h={22}>
        <rect x=".5" y="1.500" width="17" height="19" fill="none" stroke="#555" />
        <path d="M0 6h18" stroke="#555" strokeWidth="2" />
        <circle cx="11" cy="14" r="4" stroke="#555" /><path d="M3 10h3M3 13h3M3 16h3" stroke="#555" />
      </Svg>
      <div className="ml-[21px]">
        <Svg w={18} h={24}><circle cx="8" cy="3" r="2" stroke="#444" /><path d="M1 7l7 2 7-2M8 9v5l-4 9M8 14l4 9M11 17l6 6M17 17l-6 6" stroke="#444" /></Svg>
      </div>
      <span className="ml-[2px] font-bold text-[#444] text-[13.5px]">Accessibility: Investigate</span>
      <div className="ml-auto h-full flex items-center">
        <div className="w-[50px] h-full bg-[#e0e0e0] flex items-center justify-center">
          <Svg w={18} h={18}><rect x=".5" y=".5" width="17" height="17" stroke="#444" /><path d="M6 0v18M12 0v18M0 6h18M0 12h18" stroke="#444" /></Svg>
        </div>
        <div className="w-[50px] flex justify-center">
          <Svg w={18} h={18}><rect x=".5" y=".5" width="17" height="17" stroke="#444" strokeWidth="1.5" /><rect x="5" y="3" width="8" height="12" stroke="#444" /><path d="M7 6h4M7 9h4M7 12h4" stroke="#444" /></Svg>
        </div>
        <div className="w-[50px] flex justify-center">
          <Svg w={18} h={18}><path d="M.5.500h17v17H.5zM9 0v10H0" stroke="#444" strokeWidth="1.2" /><path d="M9 0v10h9" stroke="#444" /></Svg>
        </div>
        <span className="ml-[6px] w-[10px] text-[#444] text-[15px]">−</span>
        <div className="ml-[7px] w-[125px] h-[1px] bg-[#555] flex items-center">
          <div className="ml-[55px] w-[6px] h-[24px] bg-[#555] flex-none" />
          <div className="ml-[1px] w-[1px] h-[9px] bg-[#555] flex-none" />
        </div>
        <span className="ml-[6px] w-[10px] text-[#444] text-[15px]">+</span>
        <span className="ml-[16px] w-[24px] mr-[18px] whitespace-nowrap text-[13px] text-[#555]">90%</span>
      </div>
    </div>
  );
}

const TaskItem = ({ icon, on = true }: { icon: N; on?: boolean }) => (
  <div className="w-[62px] h-[50px] flex-none flex flex-col items-center">
    <div className="h-[30px] mt-[10px] flex items-center justify-center">{icon}</div>
    {on && <div className="mt-auto w-[51px] h-[3px] bg-[#0078d4]" />}
  </div>
);

function Taskbar() {
  return (
    <div className="flex-1 bg-[#d3e0ea] flex items-stretch text-black font-['Roboto',sans-serif]">
      <div className="w-[60px] flex-none flex items-center justify-center">
        <Svg w={21} h={21}><path d="M0 3l9-1.500V10H0zM10 1.300L21 0v10H10zM0 11h9v8.500L0 18zM10 11h11v10l-11-1.500z" fill="#000" /></Svg>
      </div>
      <div className="w-[360px] flex-none bg-white flex items-center pl-[15px] text-[18.5px] text-[#222]">
        <Svg w={20} h={22}><circle cx="12" cy="8" r="7" stroke="#222" strokeWidth="1.3" /><path d="M7 13l-6 8" stroke="#222" strokeWidth="1.3" /></Svg>
        <span className="ml-[15px]">Type here to search</span>
        <div className="ml-auto mr-[6px] mt-[1px]">
          <Svg w={86} h={50}>
            <ellipse cx="44" cy="40" rx="42" ry="16" fill="#a7d0ee" stroke="#7bb0dc" />
            <ellipse cx="42" cy="34" rx="30" ry="11" fill="#6caa3f" />
            <path d="M42 32c-14 0-22-6-24-12 6-2 10 0 12 2-2-8 0-14 4-18 4 2 6 6 8 10 2-6 4-10 8-12 4 4 6 10 4 20 4-2 8-4 12-2-2 6-10 12-24 12z" fill="#f0a6d0" stroke="#d987b8" />
            <path d="M42 30c-6-3-7-10-6-16 2 0 4 2 6 6 2-4 4-6 6-6 1 6 0 13-6 16z" fill="#fbd0e6" />
            <circle cx="42" cy="20" r="3.500" fill="#f5c842" />
          </Svg>
        </div>
      </div>
      <TaskItem on={false} icon={
        <Svg w={20} h={22}><path d="M1 1h9M13 1h6M1 6h2M1 21h18M4 6h11v10H4zM17 6h3M17 11h3M1 17h3" stroke="#111" strokeWidth="1.4" /></Svg>} />
      <TaskItem icon={
        <Svg w={28} h={30}><path d="M1 3h11l3 3h12v22H1z" fill="#ffca28" /><rect x="1" y="0" width="13" height="6" fill="#e8a92c" /><path d="M7 28V18h14v10h-5v-5h-4v5z" fill="#1e88e5" /></Svg>} />
      <TaskItem icon={
        <Svg w={28} h={32}>
          <circle cx="14" cy="13" r="12" fill="#fff" stroke="#ee6a6a" strokeWidth="2" />
          <path d="M14 13V1M14 13L4 7M14 13l10-6" stroke="#ccc" />
          <path d="M11 14l6 10M19 14l-6 10" stroke="#777" />
          <circle cx="10" cy="27" r="3.500" stroke="#1e88e5" strokeWidth="1.5" /><circle cx="20" cy="27" r="3.500" stroke="#1e88e5" strokeWidth="1.5" />
        </Svg>} />
      <TaskItem icon={<Svg w={30} h={32}><ellipse cx="15" cy="16" rx="12" ry="14" stroke="#e01b24" strokeWidth="6" /></Svg>} />
      <TaskItem icon={
        <Svg w={32} h={32}>
          <circle cx="15" cy="15" r="14" fill="#ea4335" />
          <path d="M15 15L4 24A14 14 0 0015 29z" fill="#34a853" />
          <path d="M15 15L3 9A14 14 0 004 24z" fill="#34a853" />
          <path d="M15 15h14a14 14 0 01-14 14z" fill="#fbbc05" />
          <circle cx="15" cy="15" r="6.500" fill="#4285f4" stroke="#fff" strokeWidth="2" />
          <circle cx="23" cy="22" r="8.500" fill="#bdbdbd" stroke="#e5e5e5" />
          <path d="M15 22h16" stroke="#8f8f8f" />
        </Svg>} />
      <TaskItem icon={
        <Svg w={28} h={32}><path d="M6 4l16-3 5 26-16 4z" fill="#bcdff2" stroke="#7aa7c0" /><path d="M6 4l4 27" stroke="#f0c47a" strokeWidth="2" /><path d="M12 9l10-2M13 14l10-2M14 19l10-2" stroke="#eef7fc" /></Svg>} />
      <TaskItem icon={<ExcelLogo s={28} />} />
      <TaskItem icon={
        <Svg w={26} h={30}>
          <rect width="26" height="30" rx="3" fill="#1f6fd6" />
          <path d="M2 28l9-14 5 7 3-3 5 10z" fill="#4fd0f7" />
          <circle cx="19" cy="8" r="2.500" fill="#dff3fd" />
        </Svg>} />
      <TaskItem icon={
        <Svg w={30} h={32}>
          <circle cx="16" cy="16" r="14" fill="#ed6c47" />
          <path d="M16 2a14 14 0 0114 14H16z" fill="#ff8f6b" />
          <path d="M16 16h14a14 14 0 01-14 14z" fill="#d35230" />
          <rect x="1" y="8" width="14" height="16" rx="1" fill="#c43e1c" />
          <text x="8" y="21" fontSize="12" fontWeight="700" fill="#fff" textAnchor="middle" fontFamily="Roboto, sans-serif">P</text>
        </Svg>} />
      <div className="flex-1 flex items-center justify-end text-[17px] text-[#222] whitespace-nowrap">
        <Svg w={32} h={44}>
          <circle cx="17" cy="24" r="14" fill="#f5a623" />
          <ellipse cx="21" cy="29" rx="10" ry="7" fill="#bcd8f0" />
          <circle cx="21" cy="12" r="8" fill="#d93025" />
          <text x="21" y="16" fontSize="11" fontWeight="700" fill="#fff" textAnchor="middle" fontFamily="Roboto, sans-serif">1</text>
        </Svg>
        <span className="ml-[8px] w-[35px]">63°F</span>
        <span className="ml-[10px] w-[105px]">Mostly sunny</span>
        <div className="ml-[32px]"><Svg w={16} h={9}><path d="M1 8l7-7 7 7" stroke="#222" strokeWidth="1.3" /></Svg></div>
        <div className="ml-[14px]"><Svg w={16} h={24}><rect x="1" y="5" width="10" height="14" rx="3" stroke="#222" /><path d="M3 1h6M3 23h6M12 10l3-2v8l-3-2" stroke="#222" /></Svg></div>
        <div className="ml-[13px]"><Svg w={20} h={22}><path d="M1 8v6h3l5 5V3L4 8z" stroke="#222" /><path d="M12 8a4 4 0 010 6M15 5a8 8 0 010 12M18 3a11 11 0 010 16" stroke="#222" /></Svg></div>
        <div className="ml-[8px]"><Svg w={22} h={24}><path d="M3 3h18v14H3zM12 17v6M7 23h10" stroke="#222" strokeWidth="1.1" /><rect x="1" y="1" width="5" height="9" fill="#d3e0ea" stroke="#222" /></Svg></div>
        <div className="ml-[10px] w-[72px] flex flex-col items-center text-[16.5px] leading-[23px]">
          <span>9:22 AM</span>
          <span>5/13/2024</span>
        </div>
        <div className="ml-[21px]"><Svg w={22} h={24}><path d="M1 1h20v18h-7l-3 3-3-3H1z" stroke="#222" strokeWidth="1.2" /></Svg></div>
        <div className="ml-[26px] mr-[27px]">
          <Svg w={26} h={36}>
            <path d="M3 18C1 8 8 1 15 1c-5 4-7 10-6 18l-3 6c-2-2-3-4-3-7z" fill="#35a7f2" />
            <path d="M15 1c6 0 9 5 10 12-3-4-7-5-10-4z" fill="#b05ee0" />
            <path d="M9 19c3 4 10 4 16-6 0 9-5 14-12 14-3 0-6-1-7-2z" fill="#f06fb0" />
            <rect x="9" y="24" width="17" height="11" rx="2" fill="#f7c800" />
            <text x="17.500" y="33" fontSize="8" fontWeight="800" fill="#222" textAnchor="middle" fontFamily="Roboto, sans-serif">PRE</text>
          </Svg>
        </div>
      </div>
    </div>
  );
}

export default function App() {
  return (
    <div className="w-[2560px] h-[1440px] overflow-hidden flex flex-col bg-[#f0f0f0] font-['Roboto',sans-serif]">
      <TitleBar />
      <MenuBar />
      <Ribbon />
      <FormulaBar />
      <Sheet />
      <SheetTabs />
      <StatusBar />
      <Taskbar />
    </div>
  );
}
